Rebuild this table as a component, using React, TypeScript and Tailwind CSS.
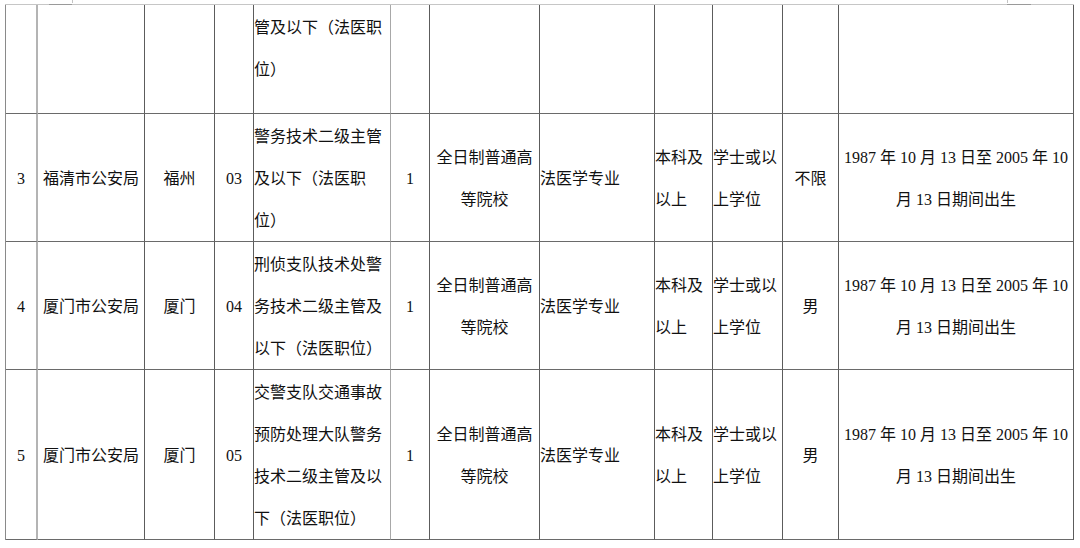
import React from 'react';

interface JobRow {
  no: string;
  unit: string;
  city: string;
  code: string;
  post: string[];
  count: string;
  edu: string[];
  major: string;
  level: string[];
  degree: string[];
  sex: string;
  height: string;
}

const rows: JobRow[] = [
  {
    no: '3',
    unit: '福清市公安局',
    city: '福州',
    code: '03',
    post: ['警务技术二级主管', '及以下（法医职', '位）'],
    count: '1',
    edu: ['全日制普通高', '等院校'],
    major: '法医学专业',
    level: ['本科及', '以上'],
    degree: ['学士或以', '上学位'],
    sex: '不限',
    height: 'h-[128px]',
  },
  {
    no: '4',
    unit: '厦门市公安局',
    city: '厦门',
    code: '04',
    post: ['刑侦支队技术处警', '务技术二级主管及', '以下（法医职位）'],
    count: '1',
    edu: ['全日制普通高', '等院校'],
    major: '法医学专业',
    level: ['本科及', '以上'],
    degree: ['学士或以', '上学位'],
    sex: '男',
    height: 'h-[128px]',
  },
  {
    no: '5',
    unit: '厦门市公安局',
    city: '厦门',
    code: '05',
    post: ['交警支队交通事故', '预防处理大队警务', '技术二级主管及以', '下（法医职位）'],
    count: '1',
    edu: ['全日制普通高', '等院校'],
    major: '法医学专业',
    level: ['本科及', '以上'],
    degree: ['学士或以', '上学位'],
    sex: '男',
    height: 'h-[170px]',
  },
];

const birth = ['1987 年 10 月 13 日至 2005 年 10', '月 13 日期间出生'];

const gridCols =
  'grid grid-cols-[32px_107px_70px_39px_137px_39px_110px_115px_58px_70px_56px_235px]';

// right border colour per column; col 1 and col 5 are the lighter rules
const rightBorder = [
  'border-r-2 border-r-[#b4b4b4]',
  'border-r border-r-[#5c5c5c]',
  'border-r border-r-[#5c5c5c]',
  'border-r border-r-[#5c5c5c]',
  'border-r border-r-[#a8a8a8]',
  'border-r border-r-[#5c5c5c]',
  'border-r border-r-[#5c5c5c]',
  'border-r border-r-[#5c5c5c]',
  'border-r border-r-[#5c5c5c]',
  'border-r border-r-[#5c5c5c]',
  'border-r border-r-[#5c5c5c]',
  'border-r border-r-[#5c5c5c]',
];

const Cell: React.FC<{
  col: number;
  align?: 'center' | 'left';
  top?: boolean;
  children?: React.ReactNode;
}> = ({ col, align = 'center', top = false, children }) => (
  <div
    className={`flex ${top ? 'items-start pt-[2px]' : 'items-center pt-[2px]'} ${
      align === 'center' ? 'justify-center text-center' : 'justify-start text-left'
    } ${rightBorder[col]} border-b border-b-[#6a6a6a] overflow-hidden`}
  >
    {children}
  </div>
);

const Lines: React.FC<{ lines: string[] }> = ({ lines }) => (
  <div className="flex flex-col">
    {lines.map((l, i) => (
      <span key={i} className="whitespace-nowrap">
        {l}
      </span>
    ))}
  </div>
);

export default function App() {
  return (
    <div
      lang="zh-CN"
      className="w-[1080px] h-[548px] bg-white overflow-hidden text-[16px] leading-[42px] text-[#111111] font-['Liberation_Serif','Noto_Sans_CJK_SC',serif]"
    >
      {/* ruler marks above the table */}
      <div className="flex h-[4px]">
        <div className="w-[72px]" />
        <div className="w-px h-[3px] bg-[#c4c4c4]" />
        <div className="w-[934px]" />
        <div className="w-px h-[3px] bg-[#c4c4c4]" />
      </div>
      <div className="flex h-px ml-[5px]">
        <div className="w-[44px] bg-[#c6c6c6]" />
        <div className="w-[23px] bg-[#9a9a9a]" />
        <div className="w-[935px] bg-[#c6c6c6]" />
        <div className="w-[24px] bg-[#9a9a9a]" />
        <div className="w-[43px] bg-[#c6c6c6]" />
      </div>

      <div className="ml-[5px] w-[1069px] border-l border-l-[#8a8a8a]">
        {/* continuation of the previous row */}
        <div className={`${gridCols} h-[109px]`}>
          {Array.from({ length: 12 }).map((_, c) =>
            c === 4 ? (
              <Cell key={c} col={c} align="left" top>
                <Lines lines={['管及以下（法医职', '位）']} />
              </Cell>
            ) : (
              <Cell key={c} col={c} />
            ),
          )}
        </div>

        {rows.map((r) => (
          <div key={r.no} className={`${gridCols} ${r.height}`}>
            <Cell col={0}>{r.no}</Cell>
            <Cell col={1}>{r.unit}</Cell>
            <Cell col={2}>{r.city}</Cell>
            <Cell col={3}>{r.code}</Cell>
            <Cell col={4} align="left">
              <Lines lines={r.post} />
            </Cell>
            <Cell col={5}>{r.count}</Cell>
            <Cell col={6}>
              <Lines lines={r.edu} />
            </Cell>
            <Cell col={7} align="left">
              {r.major}
            </Cell>
            <Cell col={8} align="left">
              <Lines lines={r.level} />
            </Cell>
            <Cell col={9} align="left">
              <Lines lines={r.degree} />
            </Cell>
            <Cell col={10}>{r.sex}</Cell>
            <Cell col={11}>
              <Lines lines={birth} />
            </Cell>
          </div>
        ))}
      </div>
    </div>
  );
}
